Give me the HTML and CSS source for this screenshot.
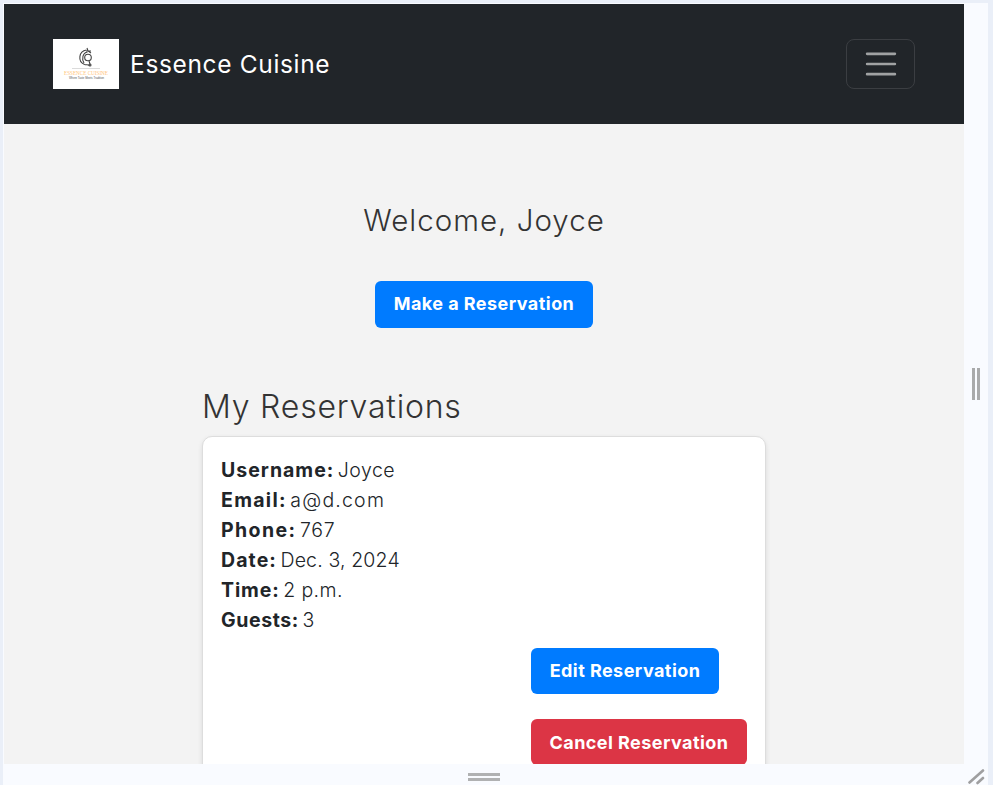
FILE: index.html
```html
<!DOCTYPE html>
<html lang="en">
<head>
<meta charset="utf-8">
<title>Essence Cuisine</title>
<link rel="stylesheet" href="styles.css">
</head>
<body>
<div class="frame">
  <div class="viewport">
    <header class="navbar">
      <a class="brand">
        <svg class="logo" viewBox="0 0 66 50" aria-hidden="true">
          <rect width="66" height="50" fill="#fff"/>
          <g fill="none" stroke="#444" stroke-width="1.1">
            <path d="M33.5 11c-8 1-9 12-2 14.500 2 .5 4 0 5 1"/>
            <path d="M34.500 13c-5 1-6 7-3.500 11"/>
            <circle cx="35" cy="18.500" r="3.300"/>
            <path d="M34 9l1 3 3 2M33 12l5 0M36 22l1 3"/>
            <circle cx="37" cy="26" r="1"/>
          </g>
          <path d="M19 29.500h28" stroke="#ccc" stroke-width=".7"/>
          <text x="11" y="36.200" textLength="44" lengthAdjust="spacingAndGlyphs" class="logo-name">ESSENCE CUISINE</text>
          <text x="16" y="40.300" textLength="35" lengthAdjust="spacingAndGlyphs" class="logo-tag">Where Taste Meets Tradition</text>
        </svg>
        <span class="brand-name">Essence Cuisine</span>
      </a>
      <button class="toggler" aria-label="Menu">
        <svg width="38" height="38" viewBox="0 0 30 30"><path d="M4 7h22M4 15h22M4 23h22" stroke="#a0a2a3" stroke-width="2" stroke-linecap="round"/></svg>
      </button>
    </header>
    <main>
      <h1 class="welcome">Welcome, Joyce</h1>
      <button class="btn make">Make a Reservation</button>
      <section class="reservations">
        <h2>My Reservations</h2>
        <article class="card">
          <p><strong class="username">Username:</strong> <span class="name">Joyce</span></p>
          <p><strong class="email">Email:</strong> <span class="address">a@d.com</span></p>
          <p><strong class="phone">Phone:</strong> <span class="number">767</span></p>
          <p><strong class="date">Date:</strong> <span class="day">Dec. 3, 2024</span></p>
          <p><strong class="time">Time:</strong> <span class="hour">2 p.m.</span></p>
          <p><strong class="guests">Guests:</strong> <span>3</span></p>
          <div class="actions">
            <button class="btn edit">Edit Reservation</button>
            <button class="btn cancel">Cancel Reservation</button>
          </div>
        </article>
      </section>
    </main>
  </div>
  <div class="handle-right"><i></i><i></i></div>
  <div class="handle-bottom"><i></i><i></i></div>
  <svg class="handle-corner" width="17" height="17" viewBox="0 0 17 17"><path d="M1.500 14.500L15 2.500M9.500 15l5.500-5" stroke="#9f9fa0" stroke-width="2.600" stroke-linecap="round"/></svg>
</div>
</body>
</html>
```
FILE: styles.css
```css
* { box-sizing: border-box; }
body {
  margin: 0;
  height: 785px;
  overflow: hidden;
  background: #eaeff8;
  font-family: Inter, "Open Sans", sans-serif;
  color: #212529;
}
.frame {
  display: grid;
  grid-template-columns: 960px 24px;
  grid-template-rows: 760px 21px;
  width: 985px;
  margin: 3px 0 0 3px;
  padding: 1px 0 0 1px;
  background: #f9fbff;
}
.viewport { overflow: hidden; background: #f3f3f3; }
.navbar {
  display: flex;
  align-items: center;
  justify-content: space-between;
  height: 120px;
  padding: 0 49px;
  background: #212529;
}
.brand { display: flex; align-items: center; gap: 11px; color: #fff; }
.logo { width: 66px; height: 50px; }
.logo-name { font: 6.8px "Liberation Serif", serif; fill: #ffc57c; }
.logo-tag { font: 3px "Liberation Sans", sans-serif; fill: #555; }
.brand-name { font-size: 24.5px; line-height: 32px; letter-spacing: 0.65px; }
.toggler {
  display: flex;
  align-items: center;
  justify-content: center;
  width: 69px;
  height: 50px;
  padding: 0;
  border: 1px solid #3b3e42;
  border-radius: 8px;
  background: none;
}
.toggler svg { fill: none; }
main { display: flex; flex-direction: column; align-items: center; padding-top: 78px; }
h1, h2 { margin: 0; font-weight: 300; color: #333; }
.welcome { font-size: 29.5px; line-height: 36px; letter-spacing: 1px; }
.btn {
  height: 46px;
  padding: 0 0 2px;
  border: 0;
  border-radius: 6px;
  background: #007bff;
  color: #fff;
  font-family: inherit;
  font-size: 18px;
  font-weight: 700;
  letter-spacing: 0.45px;
  white-space: nowrap;
}
.make { width: 218px; height: 47px; margin-top: 43px; }
.reservations { width: 564px; margin-top: 59px; }
h2 { font-size: 32px; line-height: 40px; letter-spacing: 0.8px; white-space: nowrap; }
.card {
  height: 420px;
  margin-top: 9px;
  padding: 18px;
  border: 1px solid #ddd;
  border-radius: 10px;
  background: #fff;
  box-shadow: 0 2px 5px rgba(0, 0, 0, .1);
}
.card p { margin: 0; font-size: 19.5px; font-weight: 300; line-height: 30px; white-space: nowrap; }
.card strong { margin-right: -2px; font-weight: 700; }
.username { letter-spacing: 1px; }
.email { letter-spacing: 1.3px; }
.phone { letter-spacing: 1.4px; }
.date { letter-spacing: 1.1px; }
.time { letter-spacing: 0.9px; }
.guests { letter-spacing: 0.6px; }
.name { letter-spacing: 0.5px; }
.address { letter-spacing: 1.2px; }
.number { letter-spacing: 0.8px; }
.day { letter-spacing: 0.15px; }
.hour { letter-spacing: 0.4px; }
.actions { display: flex; flex-direction: column; align-items: flex-start; gap: 25px; margin: 13px 0 0 310px; }
.edit { width: 188px; }
.cancel { width: 216px; padding-bottom: 0; background: #dc3545; }
.handle-right { display: flex; gap: 2px; align-items: center; justify-content: center; }
.handle-right i { width: 3px; height: 32px; background: #a9aaab; }
.handle-bottom { display: flex; flex-direction: column; gap: 2px; align-items: center; justify-content: center; padding-top: 5px; }
.handle-bottom i { width: 32px; height: 3px; background: #b0b1b2; }
.handle-corner { align-self: end; justify-self: end; margin-right: 3px; }
```
